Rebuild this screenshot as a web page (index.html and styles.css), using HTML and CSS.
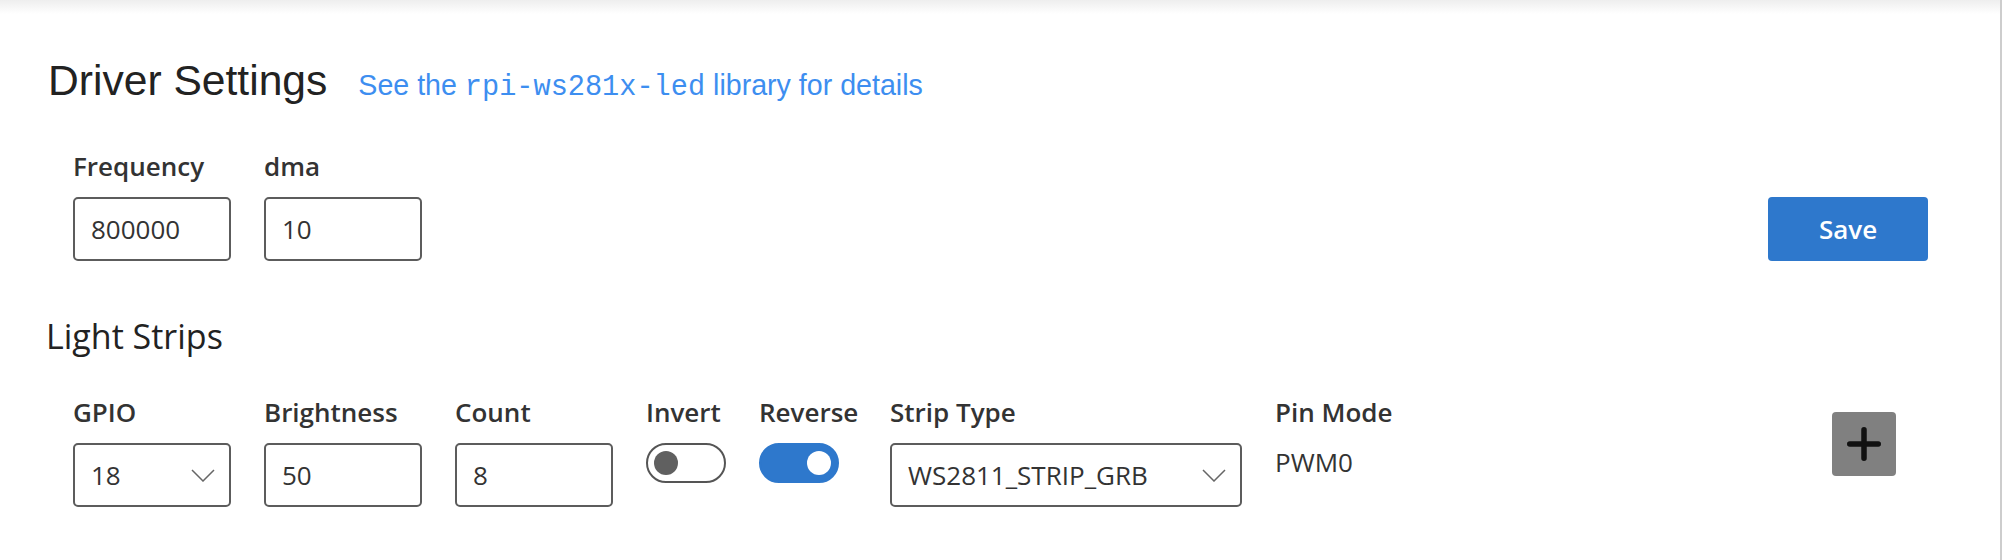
FILE: index.html
```html
<!DOCTYPE html>
<html lang="en">
<head>
<meta charset="utf-8">
<title>Driver Settings</title>
<link rel="stylesheet" href="styles.css">
</head>
<body>
<div class="page">
  <div class="topshade"></div>
  <div class="content">
    <div class="title-row">
      <h2 class="title">Driver Settings</h2>
      <a class="doc-link" href="#">See the <code>rpi-ws281x-led</code> library for details</a>
    </div>

    <div class="row row-driver">
      <div class="field">
        <label class="field-label">Frequency</label>
        <input class="text-input" type="text" value="800000">
      </div>
      <div class="field">
        <label class="field-label">dma</label>
        <input class="text-input" type="text" value="10">
      </div>
      <button class="save">Save</button>
    </div>

    <h3 class="subtitle">Light Strips</h3>

    <div class="row row-strip">
      <div class="field">
        <label class="field-label">GPIO</label>
        <div class="select w-small">
          <span>18</span>
          <svg class="chev" width="24" height="13" viewBox="0 0 24 13"><path d="M1 1 L12 12 L23 1" fill="none" stroke="#666" stroke-width="1.5"/></svg>
        </div>
      </div>
      <div class="field">
        <label class="field-label">Brightness</label>
        <input class="text-input" type="text" value="50">
      </div>
      <div class="field">
        <label class="field-label">Count</label>
        <input class="text-input" type="text" value="8">
      </div>
      <div class="field w-toggle">
        <label class="field-label">Invert</label>
        <div class="toggle off"><span class="knob"></span></div>
      </div>
      <div class="field w-reverse">
        <label class="field-label">Reverse</label>
        <div class="toggle on"><span class="knob"></span></div>
      </div>
      <div class="field">
        <label class="field-label">Strip Type</label>
        <div class="select w-large">
          <span>WS2811_STRIP_GRB</span>
          <svg class="chev" width="24" height="13" viewBox="0 0 24 13"><path d="M1 1 L12 12 L23 1" fill="none" stroke="#666" stroke-width="1.5"/></svg>
        </div>
      </div>
      <div class="field">
        <label class="field-label">Pin Mode</label>
        <div class="static-value">PWM0</div>
      </div>
      <button class="add" aria-label="Add strip">
        <svg width="34" height="34" viewBox="0 0 34 34"><path d="M2.75 17 H31.25 M17 2.75 V31.25" fill="none" stroke="#111" stroke-width="5.5" stroke-linecap="round"/></svg>
      </button>
    </div>
  </div>
</div>
</body>
</html>
```

FILE: styles.css
```css
* { box-sizing: border-box; }

html, body {
  margin: 0;
  padding: 0;
}

body {
  background: #fff;
  font-family: "Open Sans", "Noto Sans", sans-serif;
  color: #333;
}

.page {
  min-height: 560px;
  border-right: 2px solid #cdcdcd;
}

.topshade {
  height: 14px;
  background: linear-gradient(#eeeeee, #ffffff);
}

.content {
  padding: 0 72px 0 46px;
}

.title-row {
  display: flex;
  align-items: baseline;
  height: 48px;
  margin-top: 42px;
  padding-left: 2px;
}

.title {
  margin: 0;
  font: 400 42.6px/48px "Liberation Sans", Arial, sans-serif;
  color: #222;
}

.doc-link {
  margin-left: 31px;
  font: 400 28.6px/32px "Liberation Sans", Arial, sans-serif;
  color: #3d8ef0;
  text-decoration: none;
}

.doc-link code {
  font-family: "Liberation Mono", "Courier New", monospace;
  font-size: 28.6px;
}

.subtitle {
  margin: 52px 0 0;
  font: 400 34px/46px "Open Sans", "Noto Sans", sans-serif;
  color: #222;
}

.row {
  display: flex;
  gap: 33px;
  padding-left: 27px;
}

.row-driver {
  margin-top: 44px;
  align-items: flex-end;
}

.row-strip {
  margin-top: 35px;
  align-items: flex-start;
}

.field {
  display: flex;
  flex-direction: column;
}

.field-label {
  font-weight: 600;
  font-size: 26px;
  line-height: 36px;
  margin-bottom: 13px;
  color: #333;
  white-space: nowrap;
}

.text-input {
  width: 158px;
  height: 64px;
  padding: 0 16px;
  border: 2px solid #5c5c5c;
  border-radius: 5px;
  background: #fff;
  font-family: "Open Sans", "Noto Sans", sans-serif;
  font-size: 26px;
  color: #333;
  outline: none;
}

.select {
  display: flex;
  align-items: center;
  justify-content: space-between;
  height: 64px;
  padding: 0 14px 0 16px;
  border: 2px solid #5c5c5c;
  border-radius: 5px;
  background: #fff;
  font-size: 26px;
  color: #333;
}

.w-small { width: 158px; }
.w-large { width: 352px; }

.w-toggle { width: 80px; }
.w-reverse { width: 98px; }

.toggle {
  display: flex;
  align-items: center;
  width: 80px;
  height: 40px;
  border-radius: 20px;
  padding: 0 6px;
  border: 2px solid #555;
}

.toggle .knob {
  width: 24px;
  height: 24px;
  border-radius: 50%;
}

.toggle.off .knob {
  background: #606060;
}

.toggle.on {
  background: #2e78cc;
  border-color: #2e78cc;
  justify-content: flex-end;
}

.toggle.on .knob {
  background: #fff;
}

.static-value {
  font-size: 26px;
  line-height: 38px;
  color: #333;
}

.save {
  margin-left: auto;
  width: 160px;
  height: 64px;
  border: none;
  border-radius: 4px;
  background: #2e78cc;
  color: #fff;
  font-family: "Open Sans", "Noto Sans", sans-serif;
  font-weight: 600;
  font-size: 26px;
}

.add {
  margin-left: auto;
  margin-right: 32px;
  margin-top: 18px;
  width: 64px;
  height: 64px;
  padding: 0;
  border: none;
  border-radius: 4px;
  background: #808080;
  display: flex;
  align-items: center;
  justify-content: center;
}
```
